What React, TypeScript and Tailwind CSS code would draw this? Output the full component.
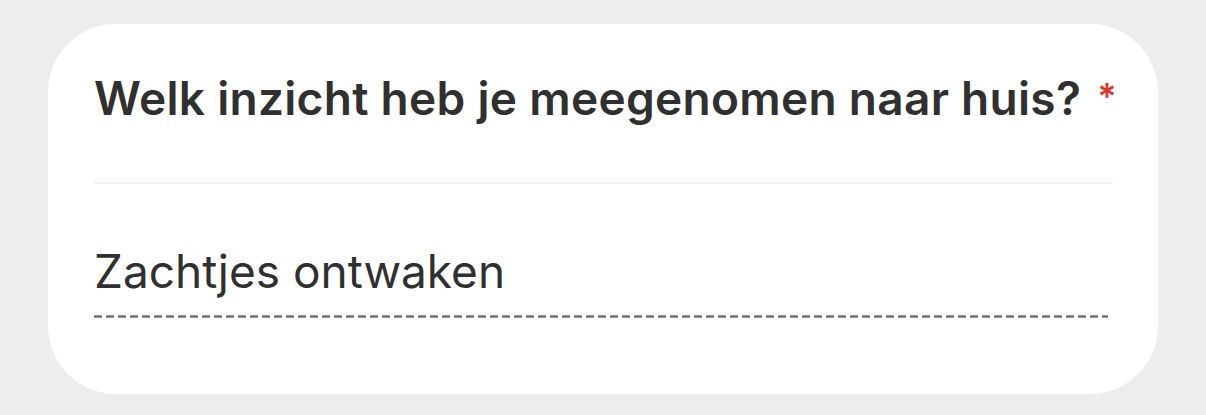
export default function App() {
  return (
    <div className="min-h-[415px] w-[1206px] bg-[#ededeb] pt-[24px] pl-[48px] font-['Inter',sans-serif]">
      <div className="w-[1110px] h-[370px] rounded-[68px] bg-white pl-[46px] pr-[45px] pt-[46px]">
        <div className="flex items-start whitespace-nowrap text-[46px] font-semibold leading-[56px] tracking-[0.3px] text-[#303030]">
          <span className="shrink-0">Welk inzicht heb je meegenomen naar huis?</span>
          <span className="ml-[16px] mt-[4px] shrink-0 text-[#d83a2c] text-[36px] leading-[44px]">*</span>
        </div>
        <div className="mt-[56px] h-[2px] bg-[#f0f0f0]" />
        <div className="mt-[59px] text-[46px] leading-[56px] text-[#303030]">Zachtjes ontwaken</div>
        <svg className="mt-[16px] block" width="1014" height="3">
          <line x1="0" y1="1.5" x2="1014" y2="1.5" stroke="#707070" strokeWidth="2.5" strokeDasharray="8 4" />
        </svg>
      </div>
    </div>
  );
}
